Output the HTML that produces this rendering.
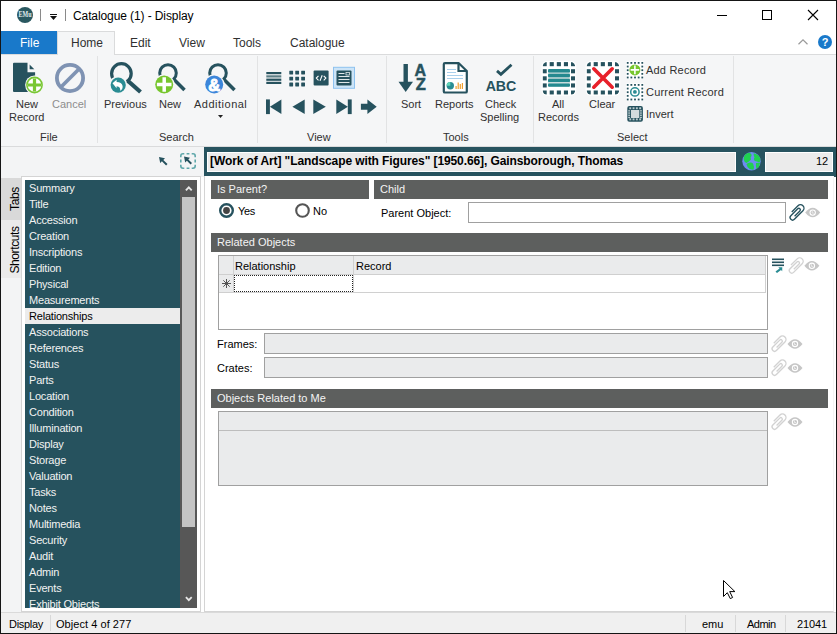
<!DOCTYPE html>
<html><head><meta charset="utf-8">
<style>
*{margin:0;padding:0;box-sizing:border-box}
html,body{width:837px;height:634px;overflow:hidden;background:#fff}
body{position:relative;font-family:"Liberation Sans",sans-serif;font-size:11px;color:#303030}
.a{position:absolute}
.t{position:absolute;white-space:nowrap;line-height:13px;font-size:11px}
svg{position:absolute;overflow:visible}
.li{position:absolute;left:0;width:155px;height:16px;line-height:16px;padding-left:4px;color:#f2f2f2;font-size:11px;letter-spacing:-0.2px;white-space:nowrap}
.li.sel{background:#ececec;color:#000}
.hd{position:absolute;height:19px;background:#5d5f5e;color:#f4f4f4;line-height:19px;padding-left:6px;font-size:11px;white-space:nowrap}
.fm{color:#000}
.vt{transform:rotate(-90deg);transform-origin:0 0}
#win{position:absolute;left:0;top:0;width:837px;height:634px;border:1px solid #151515}
</style></head><body>
<!-- title bar -->
<div class="a" style="left:1px;top:1px;width:835px;height:30px;background:#fff"></div>
<svg style="left:17px;top:7px" width="16" height="16" viewBox="0 0 16 16"><circle cx="8" cy="8" r="8" fill="#2a5860"/><text x="1.5" y="9.9" font-size="7.2" fill="#e4ecee" font-family="Liberation Serif" font-weight="bold" textLength="13" lengthAdjust="spacingAndGlyphs">EMu</text></svg>
<div class="a" style="left:40px;top:9px;width:1px;height:12px;background:#8a8a8a"></div>
<div class="a" style="left:50px;top:14px;width:7px;height:1px;background:#111"></div>
<svg style="left:50px;top:16px" width="8" height="5" viewBox="0 0 8 5"><path d="M0 0H7L3.5 4Z" fill="#111"/></svg>
<div class="a" style="left:65px;top:9px;width:1px;height:12px;background:#8a8a8a"></div>
<div class="t" style="left:73px;top:9px;letter-spacing:-0.1px;font-size:12px;line-height:14px;color:#000">Catalogue (1) - Display</div>
<div class="a" style="left:717px;top:15px;width:10px;height:1px;background:#000"></div>
<div class="a" style="left:762px;top:10px;width:10px;height:10px;border:1px solid #000"></div>
<svg style="left:808px;top:10px" width="10" height="10" viewBox="0 0 10 10"><path d="M0 0L10 10M10 0L0 10" stroke="#000" stroke-width="1.1"/></svg>

<!-- tab strip -->
<div class="a" style="left:1px;top:54px;width:835px;height:1px;background:#dadbdc"></div>
<div class="a" style="left:1px;top:31px;width:56px;height:23px;background:#1979ca"></div>
<div class="t" style="left:20px;top:36px;color:#fff;font-size:12px;line-height:14px">File</div>
<div class="a" style="left:57px;top:31px;width:58px;height:24px;background:#f5f6f7;border:1px solid #dadbdc;border-bottom:none"></div>
<div class="t" style="left:71px;top:36px;font-size:12px;line-height:14px">Home</div>
<div class="t" style="left:130px;top:36px;font-size:12px;line-height:14px">Edit</div>
<div class="t" style="left:179px;top:36px;font-size:12px;line-height:14px">View</div>
<div class="t" style="left:233px;top:36px;font-size:12px;line-height:14px">Tools</div>
<div class="t" style="left:290px;top:36px;font-size:12px;line-height:14px">Catalogue</div>
<svg style="left:798px;top:39px" width="10" height="6" viewBox="0 0 10 6"><path d="M0.5 5.2L5 0.8L9.5 5.2" stroke="#9a9a9a" stroke-width="1.2" fill="none"/></svg>
<svg style="left:818px;top:35px" width="14" height="14" viewBox="0 0 14 14"><circle cx="7" cy="7" r="7" fill="#1979ca"/><text x="7" y="11" font-size="11" font-weight="bold" fill="#fff" text-anchor="middle" font-family="Liberation Sans">?</text></svg>

<!-- ribbon -->
<div class="a" style="left:1px;top:55px;width:835px;height:91px;background:#f5f6f7"></div>
<div class="a" style="left:1px;top:146px;width:835px;height:1px;background:#dadbdc"></div>
<div class="a" style="left:97px;top:56px;width:1px;height:87px;background:#e2e3e4"></div>
<div class="a" style="left:257px;top:56px;width:1px;height:87px;background:#e2e3e4"></div>
<div class="a" style="left:386px;top:56px;width:1px;height:87px;background:#e2e3e4"></div>
<div class="a" style="left:533px;top:56px;width:1px;height:87px;background:#e2e3e4"></div>
<div class="a" style="left:733px;top:56px;width:1px;height:87px;background:#e2e3e4"></div>

<div class="t" style="left:16px;top:98px">New</div>
<div class="t" style="left:9px;top:111px">Record</div>
<div class="t" style="left:52px;top:98px;color:#8d8d8d">Cancel</div>
<div class="t" style="left:40px;top:131px">File</div>
<div class="t" style="left:104px;top:98px">Previous</div>
<div class="t" style="left:159px;top:98px">New</div>
<div class="t" style="left:194px;top:98px;letter-spacing:0.5px">Additional</div>
<svg style="left:218px;top:115px" width="5" height="3" viewBox="0 0 5 3"><path d="M0 0H5L2.5 3Z" fill="#222"/></svg>
<div class="t" style="left:159px;top:131px">Search</div>
<div class="t" style="left:307px;top:131px">View</div>
<div class="t" style="left:401px;top:98px">Sort</div>
<div class="t" style="left:435px;top:98px">Reports</div>
<div class="t" style="left:485px;top:98px">Check</div>
<div class="t" style="left:480px;top:111px">Spelling</div>
<div class="t" style="left:443px;top:131px">Tools</div>
<div class="t" style="left:552px;top:98px">All</div>
<div class="t" style="left:538px;top:111px">Records</div>
<div class="t" style="left:589px;top:98px">Clear</div>
<div class="t" style="left:646px;top:64px;letter-spacing:0.2px">Add Record</div>
<div class="t" style="left:646px;top:86px;letter-spacing:0.2px">Current Record</div>
<div class="t" style="left:646px;top:108px">Invert</div>
<div class="t" style="left:617px;top:131px">Select</div>


<!-- ribbon icons -->
<svg style="left:0;top:0" width="837" height="150" viewBox="0 0 837 150">
 <!-- New Record -->
 <path d="M14 62.7H27.5V72.2H35.1V91Q35.1 92 34.1 92H14Q13 92 13 91V63.7Q13 62.7 14 62.7Z" fill="#26525e"/>
 <path d="M29.6 64.4L34.3 69.2H29.6Z" fill="#26525e"/>
 <circle cx="34.5" cy="85" r="9.4" fill="#f5f6f7"/>
 <circle cx="34.5" cy="85" r="7.6" fill="#fff" stroke="#7ac735" stroke-width="1.6"/>
 <path d="M34.5 78.6V91.4M28 85H41" stroke="#7ac735" stroke-width="3.2"/>
 <!-- Cancel -->
 <circle cx="70" cy="78" r="13.1" fill="none" stroke="#7f93b3" stroke-width="3.8"/>
 <path d="M79.5 68.5L60.5 87.5" stroke="#7f93b3" stroke-width="3.8"/>
 <!-- Previous -->
 <circle cx="121.4" cy="73.5" r="9.8" fill="none" stroke="#26525e" stroke-width="3.2"/>
 <path d="M127.5 80.5L140.5 92" stroke="#26525e" stroke-width="4.2"/>
 <circle cx="118.2" cy="85.1" r="9.2" fill="#f5f6f7"/>
 <circle cx="118.2" cy="85.1" r="7.6" fill="#2a8c93"/>
 <path d="M112.5 83.3L116.6 79.8V82Q121.8 82 122.6 86Q123 89.5 120 90.8Q121.2 87 116.6 86.2V88.3Z" fill="#fff"/>
 <!-- New search -->
 <circle cx="168" cy="73" r="8.3" fill="none" stroke="#26525e" stroke-width="3"/>
 <path d="M173.5 79L184.5 90" stroke="#26525e" stroke-width="3.6"/>
 <circle cx="164.2" cy="84.5" r="10.3" fill="#f5f6f7"/>
 <circle cx="164.2" cy="84.5" r="9" fill="#77c62e"/>
 <path d="M164.2 77.2V91.8M156.9 84.5H171.5" stroke="#fff" stroke-width="3.5"/>
 <!-- Additional -->
 <circle cx="218" cy="73" r="8.3" fill="none" stroke="#26525e" stroke-width="3"/>
 <path d="M223.5 79L234.5 90" stroke="#26525e" stroke-width="3.6"/>
 <circle cx="214.2" cy="84.5" r="10.3" fill="#f5f6f7"/>
 <circle cx="214.2" cy="84.5" r="9" fill="#3c86da"/>
 <text x="214.3" y="90.8" font-size="16.5" font-weight="bold" fill="#fff" stroke="#fff" stroke-width="0.9" text-anchor="middle" font-family="Liberation Sans">&amp;</text>
 <!-- View: list -->
 <g fill="#26525e"><rect x="266.3" y="72" width="15" height="2.2"/><rect x="266.3" y="75.3" width="15" height="2.2" fill="#5d7f86"/><rect x="266.3" y="78.6" width="15" height="2.2"/><rect x="266.3" y="81.8" width="15" height="2.2"/></g>
 <!-- grid -->
 <g fill="#26525e"><rect x="289.30" y="70.70" width="3.8" height="3.8" rx="0.4"/><rect x="289.30" y="76.65" width="3.8" height="3.8" rx="0.4"/><rect x="289.30" y="82.60" width="3.8" height="3.8" rx="0.4"/><rect x="295.25" y="70.70" width="3.8" height="3.8" rx="0.4"/><rect x="295.25" y="76.65" width="3.8" height="3.8" rx="0.4"/><rect x="295.25" y="82.60" width="3.8" height="3.8" rx="0.4"/><rect x="301.20" y="70.70" width="3.8" height="3.8" rx="0.4"/><rect x="301.20" y="76.65" width="3.8" height="3.8" rx="0.4"/><rect x="301.20" y="82.60" width="3.8" height="3.8" rx="0.4"/></g>
 <!-- code -->
 <rect x="313.6" y="70.6" width="15" height="15" rx="1" fill="#26525e"/>
 <path d="M318.5 75.8L316.3 78.1L318.5 80.4M323.7 75.8L325.9 78.1L323.7 80.4M322.2 75.3L320 80.9" fill="none" stroke="#fff" stroke-width="1.1"/>
 <!-- selected -->
 <rect x="333.5" y="67.3" width="21" height="21" fill="#cce4f7" stroke="#8ec2ef" stroke-width="1"/>
 <rect x="336.5" y="70.6" width="15" height="15" rx="1" fill="#26525e"/>
 <g stroke="#dfe6e8" stroke-width="1"><path d="M338.5 73.5H344.5M338.5 76.5H349.5M338.5 79.5H349.5M338.5 82.5H349.5"/></g>
 <rect x="346" y="72.5" width="3.5" height="2.5" fill="none" stroke="#dfe6e8" stroke-width="0.8"/>
 <!-- nav -->
 <g fill="#26525e">
  <rect x="266" y="99.4" width="3.9" height="14.7"/><path d="M269.9 106.75L281.4 99.4V114.1Z"/>
  <path d="M292.4 106.75L304.7 99.4V114.1Z"/>
  <path d="M325.8 106.75L313.3 99.4V114.1Z"/>
  <path d="M347.9 106.75L336.3 99.4V114.1Z"/><rect x="347.8" y="99.4" width="3.9" height="14.7"/>
  <path d="M360.9 103.7H367.4V99.4L376.7 106.75L367.4 114.1V109.8H360.9Z"/>
 </g>
 <!-- Sort -->
 <g fill="#26525e">
  <rect x="403.5" y="64" width="4.4" height="18"/><path d="M398.5 81.7H413L405.7 92.1Z"/>
 </g>
 <text x="420.4" y="75.7" font-size="16" font-weight="bold" fill="#26525e" stroke="#26525e" stroke-width="0.5" text-anchor="middle" font-family="Liberation Sans">A</text>
 <text x="420.7" y="89.9" font-size="16.5" font-weight="bold" fill="#26525e" stroke="#26525e" stroke-width="0.5" text-anchor="middle" font-family="Liberation Sans">Z</text>
 <!-- Reports -->
 <path d="M445 63.2H458.8L466.8 71V91.4Q466.8 92.5 465.7 92.5H444.9Q443.8 92.5 443.8 91.4V64.3Q443.8 63.2 445 63.2Z" fill="#fff" stroke="#26525e" stroke-width="2.2" stroke-linejoin="round"/>
 <path d="M458.5 63.5V71H466.5" fill="none" stroke="#26525e" stroke-width="2.2"/>
 <g stroke="#a9d0ec" stroke-width="1"><path d="M447 69.5H456M447 72.5H456M447 75.5H463M447 78.5H463"/></g>
 <circle cx="450.3" cy="85.8" r="3.7" fill="#2a8c93"/><path d="M450.3 85.8V82.1A3.7 3.7 0 0 0 446.6 85.8Z" fill="#5fd6b8"/>
 <g fill="#f0a030"><rect x="455.5" y="86" width="1.2" height="3"/><rect x="457.6" y="82.5" width="1.2" height="6.5"/><rect x="459.7" y="84" width="1.2" height="5"/><rect x="461.8" y="83" width="1.2" height="6"/></g>
 <!-- Check spelling -->
 <path d="M497 70.9L500.9 74.4L511.5 64.7" fill="none" stroke="#26525e" stroke-width="2.8"/>
 <text x="501" y="91.4" font-size="14.2" font-weight="bold" fill="#26525e" text-anchor="middle" font-family="Liberation Sans">ABC</text>
 <!-- All Records -->
 <defs><clipPath id="ca"><rect x="542.6" y="62.1" width="32.6" height="32.6" rx="4.5"/></clipPath><clipPath id="cc"><rect x="586.6" y="62.1" width="32.6" height="32.6" rx="4.5"/></clipPath></defs>
 <rect x="541.6" y="61.1" width="34.6" height="34.6" rx="5" fill="#fff"/>
 <g fill="#26525e" clip-path="url(#ca)"><rect x="542.60" y="62.10" width="4.1" height="4.1"/><rect x="542.60" y="69.20" width="4.1" height="4.1"/><rect x="542.60" y="76.30" width="4.1" height="4.1"/><rect x="542.60" y="83.40" width="4.1" height="4.1"/><rect x="542.60" y="90.50" width="4.1" height="4.1"/><rect x="549.70" y="62.10" width="4.1" height="4.1"/><rect x="549.70" y="90.50" width="4.1" height="4.1"/><rect x="556.80" y="62.10" width="4.1" height="4.1"/><rect x="556.80" y="90.50" width="4.1" height="4.1"/><rect x="563.90" y="62.10" width="4.1" height="4.1"/><rect x="563.90" y="90.50" width="4.1" height="4.1"/><rect x="571.00" y="62.10" width="4.1" height="4.1"/><rect x="571.00" y="69.20" width="4.1" height="4.1"/><rect x="571.00" y="76.30" width="4.1" height="4.1"/><rect x="571.00" y="83.40" width="4.1" height="4.1"/><rect x="571.00" y="90.50" width="4.1" height="4.1"/></g>
 <rect x="548" y="69" width="22" height="17.8" rx="1.2" fill="#c9dcdd"/>
 <g fill="#24898f"><rect x="548" y="69" width="22" height="3.4" rx="1.2"/><rect x="548" y="73.8" width="22" height="3.4" rx="1.2"/><rect x="548" y="78.7" width="22" height="3.4" rx="1.2"/><rect x="548" y="83.4" width="22" height="3.4" rx="1.2"/></g>
 <!-- Clear -->
 <rect x="585.6" y="61.1" width="34.6" height="34.6" rx="5" fill="#fff"/>
 <g fill="#26525e" clip-path="url(#cc)"><rect x="586.60" y="62.10" width="4.1" height="4.1"/><rect x="586.60" y="69.20" width="4.1" height="4.1"/><rect x="586.60" y="76.30" width="4.1" height="4.1"/><rect x="586.60" y="83.40" width="4.1" height="4.1"/><rect x="586.60" y="90.50" width="4.1" height="4.1"/><rect x="593.70" y="62.10" width="4.1" height="4.1"/><rect x="593.70" y="90.50" width="4.1" height="4.1"/><rect x="600.80" y="62.10" width="4.1" height="4.1"/><rect x="600.80" y="90.50" width="4.1" height="4.1"/><rect x="607.90" y="62.10" width="4.1" height="4.1"/><rect x="607.90" y="90.50" width="4.1" height="4.1"/><rect x="615.00" y="62.10" width="4.1" height="4.1"/><rect x="615.00" y="69.20" width="4.1" height="4.1"/><rect x="615.00" y="76.30" width="4.1" height="4.1"/><rect x="615.00" y="83.40" width="4.1" height="4.1"/><rect x="615.00" y="90.50" width="4.1" height="4.1"/></g>
 <path d="M593.8 68.8L612.2 87.2M612.2 68.8L593.8 87.2" stroke="#e8202a" stroke-width="3.6" stroke-linecap="round"/>
 <!-- small select icons -->
 <rect x="626" y="61.3" width="18" height="17.5" fill="#fff"/>
 <g fill="#26525e"><rect x="626.80" y="62.00" width="1.8" height="1.8"/><rect x="626.80" y="65.65" width="1.8" height="1.8"/><rect x="626.80" y="69.30" width="1.8" height="1.8"/><rect x="626.80" y="72.95" width="1.8" height="1.8"/><rect x="626.80" y="76.60" width="1.8" height="1.8"/><rect x="630.45" y="62.00" width="1.8" height="1.8"/><rect x="630.45" y="76.60" width="1.8" height="1.8"/><rect x="634.10" y="62.00" width="1.8" height="1.8"/><rect x="634.10" y="76.60" width="1.8" height="1.8"/><rect x="637.75" y="62.00" width="1.8" height="1.8"/><rect x="637.75" y="76.60" width="1.8" height="1.8"/><rect x="641.40" y="62.00" width="1.8" height="1.8"/><rect x="641.40" y="65.65" width="1.8" height="1.8"/><rect x="641.40" y="69.30" width="1.8" height="1.8"/><rect x="641.40" y="72.95" width="1.8" height="1.8"/><rect x="641.40" y="76.60" width="1.8" height="1.8"/></g>
 <circle cx="634.9" cy="69.9" r="5.5" fill="#77c62e"/>
 <path d="M634.9 65.6V74.2M630.6 69.9H639.2" stroke="#fff" stroke-width="1.6"/>
 <rect x="626" y="83.3" width="18" height="17.5" fill="#fff"/>
 <g fill="#26525e"><rect x="626.80" y="84.00" width="1.8" height="1.8"/><rect x="626.80" y="87.65" width="1.8" height="1.8"/><rect x="626.80" y="91.30" width="1.8" height="1.8"/><rect x="626.80" y="94.95" width="1.8" height="1.8"/><rect x="626.80" y="98.60" width="1.8" height="1.8"/><rect x="630.45" y="84.00" width="1.8" height="1.8"/><rect x="630.45" y="98.60" width="1.8" height="1.8"/><rect x="634.10" y="84.00" width="1.8" height="1.8"/><rect x="634.10" y="98.60" width="1.8" height="1.8"/><rect x="637.75" y="84.00" width="1.8" height="1.8"/><rect x="637.75" y="98.60" width="1.8" height="1.8"/><rect x="641.40" y="84.00" width="1.8" height="1.8"/><rect x="641.40" y="87.65" width="1.8" height="1.8"/><rect x="641.40" y="91.30" width="1.8" height="1.8"/><rect x="641.40" y="94.95" width="1.8" height="1.8"/><rect x="641.40" y="98.60" width="1.8" height="1.8"/></g>
 <circle cx="634.9" cy="91.9" r="4.2" fill="none" stroke="#2a8c93" stroke-width="1.5"/>
 <circle cx="634.9" cy="91.9" r="1.9" fill="#2a8c93"/>
 <rect x="627.3" y="106" width="15.6" height="15.7" rx="2" fill="#26525e"/>
 <rect x="631" y="110" width="8.3" height="8" fill="#d3dbdd"/>
 <g fill="#b9c9cc"><rect x="629.30" y="107.3" width="1.9" height="1.9"/><rect x="629.30" y="118.4" width="1.9" height="1.9"/><rect x="628.2" y="110.20" width="1.9" height="1.3"/><rect x="640" y="110.20" width="1.9" height="1.3"/><rect x="632.60" y="107.3" width="1.9" height="1.9"/><rect x="632.60" y="118.4" width="1.9" height="1.9"/><rect x="628.2" y="112.40" width="1.9" height="1.3"/><rect x="640" y="112.40" width="1.9" height="1.3"/><rect x="635.90" y="107.3" width="1.9" height="1.9"/><rect x="635.90" y="118.4" width="1.9" height="1.9"/><rect x="628.2" y="114.60" width="1.9" height="1.3"/><rect x="640" y="114.60" width="1.9" height="1.3"/><rect x="639.20" y="107.3" width="1.9" height="1.9"/><rect x="639.20" y="118.4" width="1.9" height="1.9"/><rect x="628.2" y="116.80" width="1.9" height="1.3"/><rect x="640" y="116.80" width="1.9" height="1.3"/></g>
</svg>

<!-- below ribbon -->
<div class="a" style="left:1px;top:147px;width:203px;height:466px;background:#f3f4f5"></div><div class="a" style="left:201px;top:177px;width:3px;height:435px;background:#fff"></div>
<div class="a" style="left:204px;top:147px;width:632px;height:30px;background:#27535f"></div>
<div class="a" style="left:207px;top:152px;width:529px;height:20px;background:#ebebeb;border:1px solid #fff"></div>
<div class="t" style="left:210px;top:154px;letter-spacing:-0.1px;font-weight:bold;font-size:12px;line-height:14px;color:#000">[Work of Art] "Landscape with Figures" [1950.66], Gainsborough, Thomas</div>
<div class="a" style="left:765px;top:152px;width:68px;height:20px;background:#ebebeb;border:1px solid #fff"></div>
<div class="t" style="left:816px;top:155px;color:#000">12</div>


<!-- left panel -->
<svg style="left:159px;top:157px" width="9" height="9" viewBox="0 0 9 9"><path d="M0 0L6 1.2L4.3 2.9L8.5 7.1L7.1 8.5L2.9 4.3L1.2 6Z" fill="#26525e"/></svg>
<svg style="left:180px;top:153px" width="16" height="16" viewBox="0 0 16 16"><path d="M0.8 4.3V3Q0.8 0.8 3 0.8H4.3M11.7 0.8H13Q15.2 0.8 15.2 3V4.3M15.2 11.7V13Q15.2 15.2 13 15.2H11.7M4.3 15.2H3Q0.8 15.2 0.8 13V11.7M6.6 0.8H9.4M6.6 15.2H9.4M0.8 6.6V9.4M15.2 6.6V9.4" fill="none" stroke="#5fa7aa" stroke-width="1.6"/><path d="M4 3.5L10 4.7L8.3 6.4L12 10.1L10.6 11.5L6.9 7.8L5.2 9.5Z" fill="#26525e"/></svg>
<div class="a" style="left:1px;top:178px;width:20px;height:42px;background:#d9d9d9"></div>
<div class="a" style="left:1px;top:220px;width:20px;height:58px;background:#ebebeb"></div>
<div class="t" style="left:-10px;top:192px;width:50px;height:14px;line-height:14px;font-size:12px;letter-spacing:-0.4px;text-align:center;color:#000;transform:rotate(-90deg)">Tabs</div>
<div class="t" style="left:-10px;top:242.5px;width:50px;height:14px;line-height:14px;font-size:12px;letter-spacing:-0.4px;text-align:center;color:#000;transform:rotate(-90deg)">Shortcuts</div>
<div class="a" style="left:21px;top:176px;width:180px;height:436px;background:#fff;border:1px solid #d4d4d4;border-right:1px solid #d4d4d4"></div>
<div class="a" style="left:25px;top:180px;width:155px;height:428px;background:#26525e;overflow:hidden">
<div class="li" style="top:0px">Summary</div>
<div class="li" style="top:16px">Title</div>
<div class="li" style="top:32px">Accession</div>
<div class="li" style="top:48px">Creation</div>
<div class="li" style="top:64px">Inscriptions</div>
<div class="li" style="top:80px">Edition</div>
<div class="li" style="top:96px">Physical</div>
<div class="li" style="top:112px">Measurements</div>
<div class="li sel" style="top:128px">Relationships</div>
<div class="li" style="top:144px">Associations</div>
<div class="li" style="top:160px">References</div>
<div class="li" style="top:176px">Status</div>
<div class="li" style="top:192px">Parts</div>
<div class="li" style="top:208px">Location</div>
<div class="li" style="top:224px">Condition</div>
<div class="li" style="top:240px">Illumination</div>
<div class="li" style="top:256px">Display</div>
<div class="li" style="top:272px">Storage</div>
<div class="li" style="top:288px">Valuation</div>
<div class="li" style="top:304px">Tasks</div>
<div class="li" style="top:320px">Notes</div>
<div class="li" style="top:336px">Multimedia</div>
<div class="li" style="top:352px">Security</div>
<div class="li" style="top:368px">Audit</div>
<div class="li" style="top:384px">Admin</div>
<div class="li" style="top:400px">Events</div>
<div class="li" style="top:416px">Exhibit Objects</div>
</div>
<div class="a" style="left:180px;top:180px;width:17px;height:428px;background:#575757"></div>
<div class="a" style="left:182px;top:197px;width:13px;height:330px;background:#c4c4c4"></div>
<svg style="left:185px;top:185px" width="8" height="7" viewBox="0 0 8 7"><path d="M0.9 5.3L3.8 2.3L6.7 5.3" stroke="#e6e6e6" stroke-width="1.9" fill="none"/></svg>
<svg style="left:185px;top:596px" width="8" height="7" viewBox="0 0 8 7"><path d="M0.9 1.2L3.8 4.2L6.7 1.2" stroke="#e6e6e6" stroke-width="1.8" fill="none"/></svg>

<!-- content -->
<div class="a" style="left:204px;top:176px;width:630px;height:436px;background:#fff;border-left:1px solid #d4d4d4;border-right:1px solid #f4f4f4;border-bottom:1px solid #d4d4d4"></div>
<div class="hd" style="left:211px;top:180px;width:158px">Is Parent?</div>
<div class="hd" style="left:374px;top:180px;width:454px">Child</div>
<svg style="left:219px;top:203px" width="15" height="15" viewBox="0 0 15 15"><circle cx="7.5" cy="7.5" r="6.3" fill="#fff" stroke="#26525e" stroke-width="2.4"/><circle cx="7.5" cy="7.5" r="3.4" fill="#444"/></svg>
<div class="t fm" style="left:238px;top:205px;letter-spacing:-0.3px">Yes</div>
<svg style="left:295px;top:203px" width="15" height="15" viewBox="0 0 15 15"><circle cx="7.5" cy="7.5" r="6.3" fill="#fff" stroke="#555" stroke-width="2.1"/></svg>
<div class="t fm" style="left:313px;top:205px">No</div>
<div class="t fm" style="left:381px;top:207px">Parent Object:</div>
<div class="a" style="left:468px;top:202px;width:318px;height:21px;border:1px solid #a0a0a0;background:#fff"></div>
<div class="hd" style="left:211px;top:233px;width:617px">Related Objects</div>
<div class="a" style="left:218px;top:255px;width:550px;height:75px;border:1px solid #a0a0a0;background:#fff"></div>
<div class="a" style="left:219px;top:256px;width:547px;height:19px;background:#eaebec;border-bottom:1px solid #cfcfcf"></div>
<div class="a" style="left:219px;top:275px;width:14px;height:18px;background:#eaebec;border-bottom:1px solid #cfcfcf"></div>
<div class="a" style="left:233px;top:256px;width:1px;height:37px;background:#d0d0d0"></div>
<div class="a" style="left:353px;top:256px;width:1px;height:37px;background:#d0d0d0"></div>
<div class="a" style="left:233px;top:292px;width:533px;height:1px;background:#d0d0d0"></div>
<div class="a" style="left:765px;top:256px;width:1px;height:37px;background:#d0d0d0"></div>
<div class="t fm" style="left:235px;top:260px">Relationship</div>
<div class="t fm" style="left:356px;top:260px">Record</div>
<div class="a" style="left:234px;top:275px;width:119px;height:17px;border:1px dotted #222"></div>
<svg style="left:222px;top:279px" width="9" height="9" viewBox="0 0 9 9"><path d="M4.5 0V9M0 4.5H9M1.3 1.3L7.7 7.7M7.7 1.3L1.3 7.7" stroke="#555" stroke-width="1"/></svg>
<div class="t fm" style="left:217px;top:338px">Frames:</div>
<div class="a" style="left:264px;top:333px;width:504px;height:21px;border:1px solid #a0a0a0;background:#eaebec"></div>
<div class="t fm" style="left:217px;top:362px">Crates:</div>
<div class="a" style="left:264px;top:357px;width:504px;height:21px;border:1px solid #a0a0a0;background:#eaebec"></div>
<div class="hd" style="left:211px;top:389px;width:617px">Objects Related to Me</div>
<div class="a" style="left:218px;top:411px;width:550px;height:75px;border:1px solid #a0a0a0;background:#eaebec"></div>
<div class="a" style="left:219px;top:430px;width:548px;height:1px;background:#bdbdbd"></div>



<svg style="left:0;top:0" width="837" height="634" viewBox="0 0 837 634">
 <!-- globe -->
 <circle cx="751.5" cy="161.2" r="9.2" fill="#6d8cf2"/>
 <path d="M743.6 159Q744 153.8 749 152.8Q752 153.5 751.5 156Q750 157 751 159.5Q749 161.5 746.5 163Q744 162 743.6 159Z" fill="#1fd150"/>
 <path d="M753.8 153.2Q758.5 154 760.3 158.5Q760.5 161 759.5 162.5Q756.5 161 755 161Q753 159.5 754.5 157.5Q753 155.5 753.8 153.2Z" fill="#1fd150"/>
 <path d="M746.5 164Q750.5 161.5 753 163.5Q754.5 166.5 753.5 169.8Q749.5 170 747.5 167Z" fill="#1fd150"/>
 <path d="M756 163Q759 162.5 760.2 163Q759.5 167 756.5 169Q755.5 166 756 163Z" fill="#1fd150"/>
 <!-- parent object clip/eye -->
 <g transform="translate(796,212.7) rotate(-45) scale(1)"><path d="M-3.5 1.5H4A1.5 1.5 0 0 0 4 -1.5H-5.8A2.5 2.5 0 0 0 -5.8 3.5H6.3A3.5 3.5 0 0 0 6.3 -3.5H-2.5" fill="none" stroke="#26525e" stroke-width="1.35"/></g>
 <path d="M805.2 212.6Q812.7 203.1 820.2 212.6Q812.7 222.1 805.2 212.6Z" fill="#c6c6c6"/><circle cx="812.7" cy="212.6" r="3.2" fill="#fff"/><circle cx="812.7" cy="212.6" r="2.1" fill="#c6c6c6"/><path d="M812.2 211.0V213.1H813.9000000000001" stroke="#fff" stroke-width="0.6" fill="none"/>
 <!-- related objects icons -->
 <g fill="#26525e"><rect x="772" y="258.5" width="12" height="1.6"/><rect x="772" y="261.5" width="12" height="1.6"/><rect x="772" y="264.5" width="12" height="1.6"/></g>
 <path d="M775.5 271.5L779.5 268.5L778.3 267.3L782.3 267.2L782.2 271.2L781 270L777 273Z" fill="#2a8c93"/>
 <g transform="translate(795.2,265.8) rotate(-45) scale(1)"><path d="M-3.5 1.5H4A1.5 1.5 0 0 0 4 -1.5H-5.8A2.5 2.5 0 0 0 -5.8 3.5H6.3A3.5 3.5 0 0 0 6.3 -3.5H-2.5" fill="none" stroke="#d2d2d2" stroke-width="1.35"/></g>
 <path d="M804.4 265.8Q811.9 256.3 819.4 265.8Q811.9 275.3 804.4 265.8Z" fill="#c6c6c6"/><circle cx="811.9" cy="265.8" r="3.2" fill="#fff"/><circle cx="811.9" cy="265.8" r="2.1" fill="#c6c6c6"/><path d="M811.4 264.2V266.3H813.1" stroke="#fff" stroke-width="0.6" fill="none"/>
 <!-- frames/crates/objects -->
 <g transform="translate(778,344) rotate(-45) scale(1)"><path d="M-3.5 1.5H4A1.5 1.5 0 0 0 4 -1.5H-5.8A2.5 2.5 0 0 0 -5.8 3.5H6.3A3.5 3.5 0 0 0 6.3 -3.5H-2.5" fill="none" stroke="#d2d2d2" stroke-width="1.35"/></g>
 <path d="M787.5 344Q795 334.5 802.5 344Q795 353.5 787.5 344Z" fill="#c6c6c6"/><circle cx="795" cy="344" r="3.2" fill="#fff"/><circle cx="795" cy="344" r="2.1" fill="#c6c6c6"/><path d="M794.5 342.4V344.5H796.2" stroke="#fff" stroke-width="0.6" fill="none"/>
 <g transform="translate(778,368) rotate(-45) scale(1)"><path d="M-3.5 1.5H4A1.5 1.5 0 0 0 4 -1.5H-5.8A2.5 2.5 0 0 0 -5.8 3.5H6.3A3.5 3.5 0 0 0 6.3 -3.5H-2.5" fill="none" stroke="#d2d2d2" stroke-width="1.35"/></g>
 <path d="M787.5 368Q795 358.5 802.5 368Q795 377.5 787.5 368Z" fill="#c6c6c6"/><circle cx="795" cy="368" r="3.2" fill="#fff"/><circle cx="795" cy="368" r="2.1" fill="#c6c6c6"/><path d="M794.5 366.4V368.5H796.2" stroke="#fff" stroke-width="0.6" fill="none"/>
 <g transform="translate(778,422) rotate(-45) scale(1)"><path d="M-3.5 1.5H4A1.5 1.5 0 0 0 4 -1.5H-5.8A2.5 2.5 0 0 0 -5.8 3.5H6.3A3.5 3.5 0 0 0 6.3 -3.5H-2.5" fill="none" stroke="#d2d2d2" stroke-width="1.35"/></g>
 <path d="M787.5 422Q795 412.5 802.5 422Q795 431.5 787.5 422Z" fill="#c6c6c6"/><circle cx="795" cy="422" r="3.2" fill="#fff"/><circle cx="795" cy="422" r="2.1" fill="#c6c6c6"/><path d="M794.5 420.4V422.5H796.2" stroke="#fff" stroke-width="0.6" fill="none"/>
</svg>

<!-- status bar -->
<div class="a" style="left:1px;top:612px;width:835px;height:1px;background:#dadada"></div>
<div class="a" style="left:1px;top:613px;width:835px;height:20px;background:#f0f0f0"></div>
<div class="t" style="left:9px;top:618px;color:#000;letter-spacing:-0.3px">Display</div>
<div class="a" style="left:50px;top:615px;width:1px;height:16px;background:#d8d8d8"></div>
<div class="t" style="left:56px;top:618px;color:#000;letter-spacing:0.05px">Object 4 of 277</div>
<div class="a" style="left:685px;top:615px;width:1px;height:17px;background:#d8d8d8"></div><div class="a" style="left:735px;top:615px;width:1px;height:17px;background:#d8d8d8"></div><div class="a" style="left:785px;top:615px;width:1px;height:17px;background:#d8d8d8"></div>
<div class="t" style="left:702px;top:618px;color:#000">emu</div>
<div class="t" style="left:747px;top:618px;color:#000;letter-spacing:-0.5px">Admin</div>
<div class="t" style="left:797px;top:618px;color:#000;letter-spacing:-0.1px">21041</div>

<svg style="left:723px;top:580px" width="13" height="20" viewBox="0 0 13 20"><path d="M0.5 0.5V16.5L4.3 12.7L7.3 18.6L9.6 17.5L6.7 11.6H11.9Z" fill="#fff" stroke="#000" stroke-width="1" stroke-linejoin="round"/></svg>
<div id="win"></div>
</body></html>
